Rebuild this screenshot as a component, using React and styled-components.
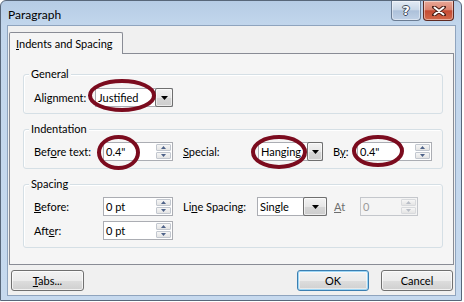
import React from "react";
import styled, { createGlobalStyle } from "styled-components";

const Global = createGlobalStyle`
  html, body { margin: 0; padding: 0; background: #ffffff; }
  body {
    font-family: "Segoe UI", Lato, "Liberation Sans", sans-serif;
    font-size: 11px;
    color: #000;
  }
`;

const Page = styled.div`
  position: relative;
  width: 464px;
  height: 302px;
`;

const Window = styled.div`
  box-sizing: border-box;
  width: 462px;
  height: 301px;
  border: 1px solid #58677a;
  border-radius: 6px 6px 0 0;
  background: linear-gradient(180deg, #b6cce5 0px, #c2d6ec 24px, #c6d9ee 100%);
  padding: 0 5px 4px 6px;
  display: flex;
  flex-direction: column;
`;

const TitleBar = styled.div`
  height: 24px;
  display: flex;
  align-items: flex-start;
  justify-content: space-between;
`;

const Title = styled.div`
  padding: 6px 0 0 1px;
  font-size: 12px;
  line-height: 16px;
  color: #000;
`;

const CaptionButtons = styled.div`
  display: flex;
  gap: 2px;
  margin-right: 2px;
`;

const CaptionButton = styled.div`
  box-sizing: border-box;
  width: ${(p) => p.$w}px;
  height: 20px;
  border: 1px solid ${(p) => (p.$close ? "#5e2a22" : "#6a7c93")};
  border-top: none;
  border-radius: 0 0 4px 4px;
  background: ${(p) =>
    p.$close
      ? "linear-gradient(180deg, #e9a898 0%, #dc8470 45%, #c44a32 52%, #d2694b 100%)"
      : "linear-gradient(180deg, #e3ebf5 0%, #cad8e8 45%, #adc1da 52%, #c0d1e6 100%)"};
  box-shadow: inset 0 0 0 1px rgba(255, 255, 255, 0.45);
  display: flex;
  align-items: center;
  justify-content: center;
`;

const HelpGlyph = styled.span`
  font-family: "DejaVu Sans", sans-serif;
  font-weight: bold;
  font-size: 13px;
  line-height: 13px;
  color: #ffffff;
  text-shadow: 1px 0 #3d4a5c, -1px 0 #3d4a5c, 0 1px #3d4a5c, 0 -1px #3d4a5c;
`;

const Client = styled.div`
  box-sizing: border-box;
  flex: 1;
  background: #f0f0f0;
  border: 1px solid #8fa4be;
  padding: 6px 1px 4px 1px;
  display: flex;
  flex-direction: column;
`;

const TabStrip = styled.div`
  display: flex;
  height: 21px;
`;

const Tab = styled.div`
  box-sizing: border-box;
  position: relative;
  z-index: 1;
  width: 114px;
  height: 22px;
  border: 1px solid #898c95;
  border-bottom: none;
  border-radius: 2px 2px 0 0;
  background: #f5f5f5;
  padding: 3px 0 0 6px;
  line-height: 15px;
`;

const TabPanel = styled.div`
  box-sizing: border-box;
  height: 212px;
  border: 1px solid #898c95;
  background: #f5f5f5;
  padding: 20px 10px 16px 13px;
  display: flex;
  flex-direction: column;
  gap: 15px;
`;

const Group = styled.div`
  box-sizing: border-box;
  position: relative;
  height: ${(p) => p.$h}px;
  border: 1px solid #d5dfe5;
  border-radius: 3px;
  box-shadow: inset 1px 1px 0 #ffffff;
  padding: ${(p) => p.$pt}px 0 0 10px;
  display: flex;
  flex-direction: column;
  gap: 5px;
`;

const GroupLabel = styled.div`
  position: absolute;
  top: -9px;
  left: 5px;
  padding: 0 2px;
  background: #f5f5f5;
  line-height: 16px;
`;

const Row = styled.div`
  display: flex;
  align-items: center;
  height: 19px;
`;

const Label = styled.div`
  width: ${(p) => p.$w}px;
  margin-left: ${(p) => p.$ml || 0}px;
  flex: none;
  line-height: 16px;
  color: ${(p) => (p.$disabled ? "#6d6d6d" : "#000")};
  white-space: nowrap;
`;

const Key = styled.span`
  text-decoration: underline;
  text-underline-offset: 1px;
`;

const Field = styled.div`
  box-sizing: border-box;
  width: ${(p) => p.$w}px;
  height: 19px;
  flex: none;
  display: flex;
  align-items: stretch;
  border: 1px solid ${(p) => (p.$disabled ? "#c4c7cc" : "#abadb3")};
  background: ${(p) => (p.$disabled ? "#f4f4f4" : "#ffffff")};
`;

const FieldText = styled.div`
  flex: 1;
  padding-left: ${(p) => p.$pl || 2}px;
  line-height: 17px;
  color: ${(p) => (p.$disabled ? "#9a9a9a" : "#000")};
  white-space: nowrap;
  overflow: hidden;
`;

const Spinner = styled.div`
  width: 15px;
  display: flex;
  flex-direction: column;
  gap: 1px;
  padding: 1px 1px 1px 0;
`;

const SpinButton = styled.div`
  box-sizing: border-box;
  flex: 1;
  border: 1px solid ${(p) => (p.$disabled ? "#d8dadd" : "#c2c7cf")};
  border-radius: 1px;
  background: linear-gradient(180deg, #f6f6f6, #e4e4e4);
  display: flex;
  align-items: center;
  justify-content: center;
`;

const DropButton = styled.div`
  box-sizing: border-box;
  width: ${(p) => p.$w}px;
  margin: -1px -1px -1px 0;
  border: 1px solid #6f6f6f;
  border-radius: 2px;
  background: linear-gradient(180deg, #f3f3f3 0%, #e6e6e6 50%, #d6d6d6 51%, #cdcdcd 100%);
  box-shadow: inset 0 0 0 1px rgba(255, 255, 255, 0.6);
  display: flex;
  align-items: center;
  justify-content: center;
`;

const ButtonRow = styled.div`
  margin-top: 5px;
  padding: 0 1px 0 2px;
  display: flex;
  justify-content: space-between;
`;

const RightButtons = styled.div`
  display: flex;
  gap: 12px;
`;

const PushButton = styled.div`
  box-sizing: border-box;
  width: ${(p) => p.$w}px;
  height: 21px;
  border: 1px solid ${(p) => (p.$default ? "#3c7fb1" : "#707070")};
  border-radius: 3px;
  background: linear-gradient(180deg, #f2f2f2 0%, #ebebeb 50%, #dddddd 51%, #cfcfcf 100%);
  box-shadow: ${(p) =>
    p.$default
      ? "inset 0 0 0 1px #9ed6f5, inset 0 0 0 2px rgba(255,255,255,0.5)"
      : "inset 0 0 0 1px rgba(255,255,255,0.7)"};
  display: flex;
  align-items: center;
  justify-content: center;
  line-height: 16px;
`;

const Overlay = styled.svg`
  position: absolute;
  left: 0;
  top: 0;
  pointer-events: none;
`;

const DownArrow = () => (
  <svg width="7" height="4" viewBox="0 0 7 4">
    <path d="M0 0 H7 L3.5 4 Z" fill="#000" />
  </svg>
);

const SpinArrow = ({ up, disabled }) => (
  <svg width="5" height="3" viewBox="0 0 5 3">
    <path
      d={up ? "M0 3 H5 L2.5 0 Z" : "M0 0 H5 L2.5 3 Z"}
      fill={disabled ? "#b8bdc6" : "#4e6288"}
    />
  </svg>
);

const Spin = ({ w, value, disabled }) => (
  <Field $w={w} $disabled={disabled}>
    <FieldText $disabled={disabled}>{value}</FieldText>
    <Spinner>
      <SpinButton $disabled={disabled}>
        <SpinArrow up disabled={disabled} />
      </SpinButton>
      <SpinButton $disabled={disabled}>
        <SpinArrow disabled={disabled} />
      </SpinButton>
    </Spinner>
  </Field>
);

const Combo = ({ w, bw, value }) => (
  <Field $w={w}>
    <FieldText>{value}</FieldText>
    <DropButton $w={bw}>
      <DownArrow />
    </DropButton>
  </Field>
);

export default function App() {
  return (
    <Page>
      <Global />
      <Window>
        <TitleBar>
          <Title>Paragraph</Title>
          <CaptionButtons>
            <CaptionButton $w={30}>
              <HelpGlyph>?</HelpGlyph>
            </CaptionButton>
            <CaptionButton $w={31} $close>
              <svg width="14" height="10" viewBox="0 0 14 10">
                <path d="M2 1 L12 9 M12 1 L2 9" stroke="#4a2018" strokeWidth="4" strokeLinecap="round" />
                <path d="M2.5 1.5 L11.5 8.5 M11.5 1.5 L2.5 8.5" stroke="#ffffff" strokeWidth="2" strokeLinecap="round" />
              </svg>
            </CaptionButton>
          </CaptionButtons>
        </TitleBar>
        <Client>
          <TabStrip>
            <Tab>
              <Key>I</Key>ndents and Spacing
            </Tab>
          </TabStrip>
          <TabPanel>
            <Group $h={40} $pt={13}>
              <GroupLabel>General</GroupLabel>
              <Row>
                <Label $w={61}>Alignment:</Label>
                <Combo w={78} bw={18} value="Justified" />
              </Row>
            </Group>
            <Group $h={40} $pt={12}>
              <GroupLabel>Indentation</GroupLabel>
              <Row>
                <Label $w={69}>
                  Bef<Key>o</Key>re text:
                </Label>
                <Spin w={70} value={'0.4"'} />
                <Label $w={75} $ml={10}>
                  <Key>S</Key>pecial:
                </Label>
                <Combo w={65} bw={16} value="Hanging" />
                <Label $w={24} $ml={10}>
                  B<Key>y</Key>:
                </Label>
                <Spin w={75} value={'0.4"'} />
              </Row>
            </Group>
            <Group $h={64} $pt={12}>
              <GroupLabel>Spacing</GroupLabel>
              <Row>
                <Label $w={69}>
                  <Key>B</Key>efore:
                </Label>
                <Spin w={70} value="0 pt" />
                <Label $w={74} $ml={10}>
                  Li<Key>n</Key>e Spacing:
                </Label>
                <Combo w={70} bw={24} value="Single" />
                <Label $w={26} $ml={7} $disabled>
                  <Key>A</Key>t
                </Label>
                <Spin w={58} value="0" disabled />
              </Row>
              <Row>
                <Label $w={69}>
                  Aft<Key>e</Key>r:
                </Label>
                <Spin w={70} value="0 pt" />
              </Row>
            </Group>
          </TabPanel>
          <ButtonRow>
            <PushButton $w={73}>
              <span>
                <Key>T</Key>abs...
              </span>
            </PushButton>
            <RightButtons>
              <PushButton $w={72} $default>
                OK
              </PushButton>
              <PushButton $w={72}>Cancel</PushButton>
            </RightButtons>
          </ButtonRow>
        </Client>
      </Window>
      <Overlay width="464" height="302" viewBox="0 0 464 302">
        <g fill="none" stroke="#7b0b1e" strokeWidth="4">
          <ellipse cx="122" cy="95.5" rx="32" ry="14.5" />
          <ellipse cx="118.5" cy="152.5" rx="19.5" ry="15.5" />
          <ellipse cx="279" cy="152" rx="26" ry="15" />
          <ellipse cx="378" cy="151" rx="24" ry="14" />
        </g>
      </Overlay>
    </Page>
  );
}
